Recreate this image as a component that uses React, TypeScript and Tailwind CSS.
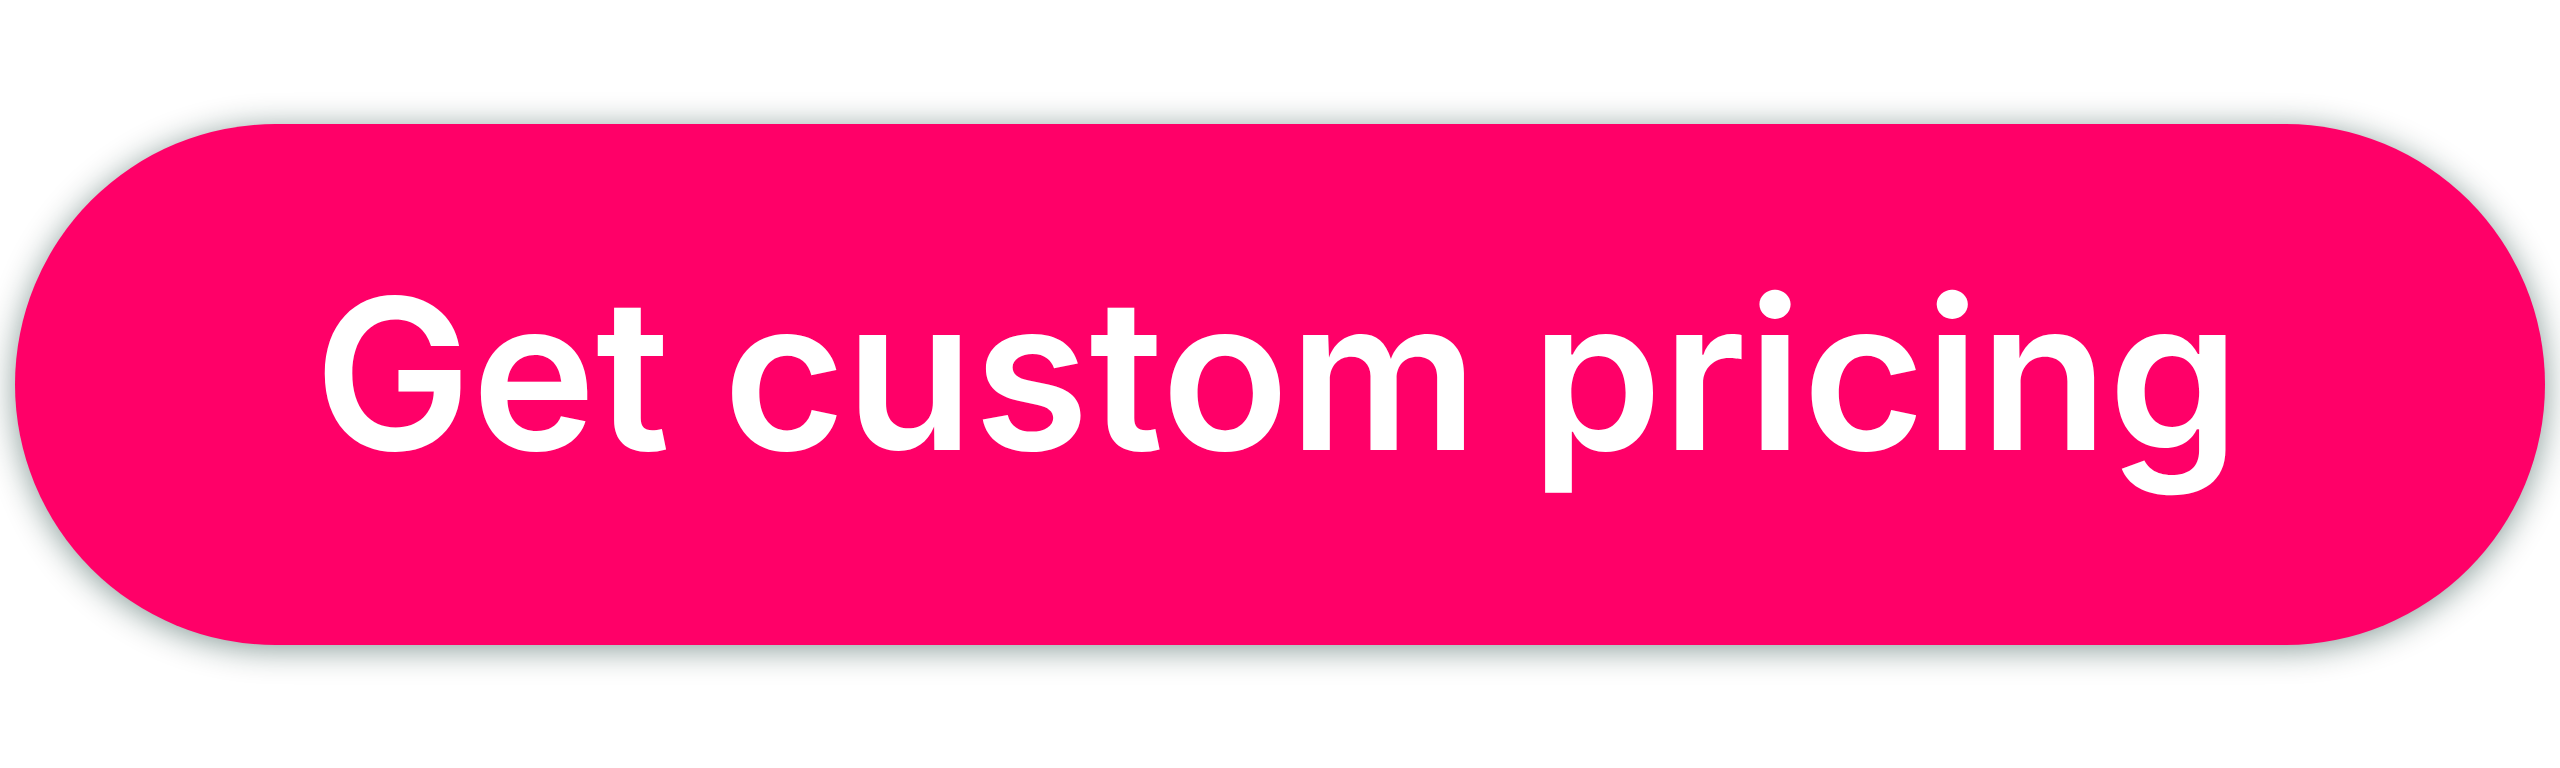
import React from 'react';

const App = () => {
  return (
    <main className="flex min-h-screen flex-col bg-white px-[15px] py-[124px]">
      <button
        type="button"
        className="w-full rounded-full bg-[#ff0068] pt-[122px] pr-1.5 pb-[143px] text-center font-['Inter',sans-serif] text-[210px] leading-[256px] font-semibold whitespace-nowrap text-white shadow-[0_4px_32px_rgba(0,44,38,0.48)]"
      >
        Get custom pricing
      </button>
    </main>
  );
};

export default App;
